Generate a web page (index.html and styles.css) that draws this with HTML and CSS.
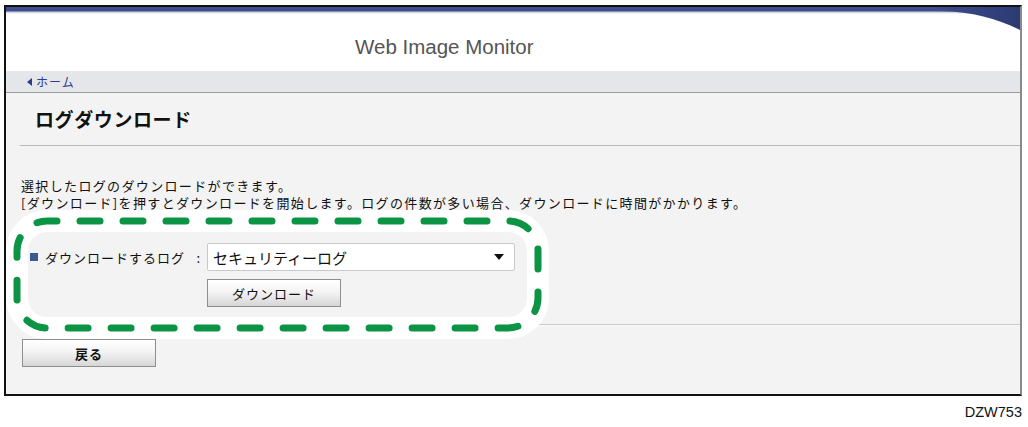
FILE: index.html
```html
<!DOCTYPE html>
<html lang="ja">
<head>
<meta charset="utf-8">
<title>ログダウンロード</title>
<link rel="stylesheet" href="styles.css">
</head>
<body>
<div class="frame">
  <div class="topbar"></div>
  <svg class="swoosh" width="80" height="26" viewBox="0 0 80 26">
    <defs>
      <linearGradient id="sw" x1="0" y1="0" x2="1" y2="0">
        <stop offset="0" stop-color="#3d4c88"/>
        <stop offset="1" stop-color="#2c3a74"/>
      </linearGradient>
    </defs>
    <path d="M0,0 H80 V23 C58,12 34,5 0,4 Z" fill="url(#sw)"/>
  </svg>
  <div class="header"><span class="title">Web Image Monitor</span></div>
  <div class="nav"><span class="back-tri"></span><span class="home">ホーム</span></div>
  <div class="content">
    <h1 class="heading">ログダウンロード</h1>
    <div class="rule"></div>
    <p class="desc">選択したログのダウンロードができます。<br>[ダウンロード]を押すとダウンロードを開始します。ログの件数が多い場合、ダウンロードに時間がかかります。</p>
    <div class="form">
      <div class="label"><span class="square"></span><span class="label-text">ダウンロードするログ</span><span class="colon">:</span></div>
      <div class="select"><span>セキュリティーログ</span><span class="arrow"></span></div>
      <div class="btn download">ダウンロード</div>
    </div>
    <div class="sep"></div>
    <div class="btn back">戻る</div>
    <svg class="callout" width="550" height="145" viewBox="0 0 550 145">
      <rect x="11" y="16" width="521" height="107" rx="30" ry="30" fill="none" stroke="#ffffff" stroke-width="22"/>
      <rect x="11" y="16" width="521" height="107" rx="30" ry="30" fill="none" stroke="#0b9444" stroke-width="7" stroke-linecap="round" stroke-dasharray="20 23" stroke-dashoffset="10"/>
    </svg>
  </div>
</div>
<div class="code">DZW753</div>
</body>
</html>
```

FILE: styles.css
```css
* { box-sizing: border-box; }
html, body { margin: 0; padding: 0; background: #ffffff; }
body {
  font-family: "Noto Sans CJK JP", "Liberation Sans", sans-serif;
  color: #111;
}
.frame {
  position: relative;
  margin: 5px 0 0 4px;
  width: 1018px;
  height: 391px;
  border-style: solid;
  border-width: 2px;
  border-color: #111 #8a8a8a #111 #111;
  display: flex;
  flex-direction: column;
  background: #fff;
}
.topbar {
  height: 7px;
  background: linear-gradient(to bottom, #3f4e8a 0, #3f4e8a 4px, #c9cad6 5px, #ffffff 7px);
}
.swoosh {
  position: absolute;
  top: 0;
  right: 0;
}
.header {
  height: 57px;
  padding: 21px 0 0 349px;
}
.title {
  display: block;
  font-family: "Liberation Sans", Arial, sans-serif;
  font-size: 20.5px;
  line-height: 24px;
  color: #555;
}
.nav {
  height: 22px;
  background: #e5e6ea;
  border-bottom: 1px solid #9c9c9c;
  display: flex;
  align-items: center;
  padding-left: 21px;
  gap: 4px;
}
.back-tri {
  width: 0;
  height: 0;
  border-top: 4px solid transparent;
  border-bottom: 4px solid transparent;
  border-right: 5px solid #2b3d8c;
}
.home {
  font-size: 12px;
  letter-spacing: 1px;
  color: #2b3d8c;
  line-height: 21px;
}
.content {
  position: relative;
  flex: 1;
  background: #f3f3f3;
  display: flex;
  flex-direction: column;
}
.heading {
  margin: 0;
  height: 52px;
  line-height: 52px;
  padding-left: 29px;
  font-size: 19px;
  font-weight: bold;
  letter-spacing: 0.6px;
  color: #111;
}
.rule {
  height: 1px;
  background: #b9b9b9;
  margin-left: 14px;
}
.desc {
  margin: 31px 0 0 0;
  padding-left: 15px;
  font-size: 13px;
  letter-spacing: 1.35px;
  line-height: 17px;
  color: #111;
}
.form {
  margin-top: 32px;
  padding-left: 24px;
  display: grid;
  grid-template-columns: 177px 308px;
  row-gap: 8px;
}
.label {
  display: flex;
  align-items: center;
  font-size: 13px;
  letter-spacing: 1px;
}
.square {
  width: 8px;
  height: 8px;
  background: #3b5a8f;
  margin-right: 7px;
}
.colon {
  margin-left: auto;
  margin-right: 6px;
}
.select {
  height: 28px;
  background: #fff;
  border: 1px solid #c9c9c9;
  border-radius: 2px;
  display: flex;
  align-items: center;
  justify-content: space-between;
  padding: 0 10px 0 5px;
  font-size: 15px;
}
.arrow {
  width: 0;
  height: 0;
  border-left: 5px solid transparent;
  border-right: 5px solid transparent;
  border-top: 6px solid #111;
}
.btn {
  width: 134px;
  height: 28px;
  border: 1px solid #8e8e8e;
  background: linear-gradient(to bottom, #ffffff 0%, #f4f4f4 45%, #d6d6d6 100%);
  display: flex;
  align-items: center;
  justify-content: center;
  font-size: 13px;
  letter-spacing: 1px;
  color: #111;
}
.download {
  grid-column: 2;
}
.sep {
  margin-top: 17px;
  height: 1px;
  background: #cacaca;
  margin-left: 14px;
  box-shadow: 0 1px 0 #fbfbfb;
}
.back {
  margin: 14px 0 0 16px;
  font-weight: bold;
}
.callout {
  position: absolute;
  left: 0;
  top: 112px;
}
.code {
  margin-top: 8px;
  padding-right: 6px;
  text-align: right;
  font-family: "Liberation Sans", Arial, sans-serif;
  font-size: 14.5px;
  line-height: 16px;
  color: #111;
}
```
